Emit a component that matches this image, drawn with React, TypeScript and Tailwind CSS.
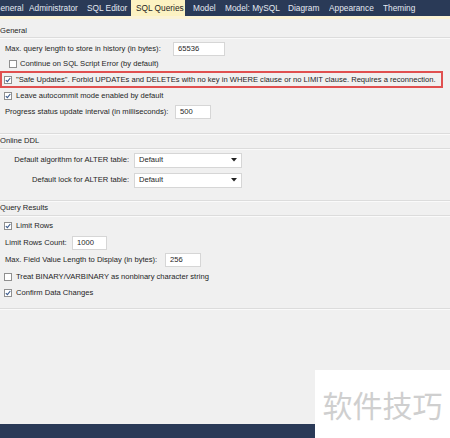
import React from 'react';

const tabs = [
  { label: 'General', w: 'w-[29px]', pad: '', cut: true },
  { label: 'Administrator', w: 'w-[58px]', pad: '' },
  { label: 'SQL Editor', w: 'w-[44px]', pad: '' },
  { label: 'SQL Queries', w: 'w-[54px]', pad: 'pl-[5px]', active: true },
  { label: 'Model', w: 'w-[40px]', pad: 'pl-[8px]' },
  { label: 'Model: MySQL', w: 'w-[63px]', pad: '' },
  { label: 'Diagram', w: 'w-[41px]', pad: '' },
  { label: 'Appearance', w: 'w-[54px]', pad: '' },
  { label: 'Theming', w: 'w-[60px]', pad: '' },
];

function Check({ checked }: { checked?: boolean }) {
  return (
    <span className="w-[8px] h-[8px] border border-[#8f8f8f] bg-white flex items-center justify-center shrink-0">
      {checked && (
        <svg width="6" height="6" viewBox="0 0 6 6">
          <path d="M0.8 3.1 L2.4 4.7 L5.3 1" stroke="#3a5a8c" strokeWidth="1.1" fill="none" />
        </svg>
      )}
    </span>
  );
}

function Field({ value, w }: { value: string; w: string }) {
  return (
    <span className={`${w} h-[14px] bg-white border border-[#d6d6d6] flex items-center pl-[4px] shrink-0`}>{value}</span>
  );
}

function Select({ value }: { value: string }) {
  return (
    <span className="w-[108px] h-[15px] bg-white border border-[#d6d6d6] flex items-center justify-between pl-[4px] pr-[4px]">
      <span>{value}</span>
      <svg width="6" height="4" viewBox="0 0 6 4">
        <path d="M0 0 H6 L3 3.5 Z" fill="#222" />
      </svg>
    </span>
  );
}

function SectionHead({ title, h }: { title: string; h: string }) {
  return (
    <div className={`${h} flex items-center border-b border-[#dcdcdc] shadow-[0_1px_0_#fafafa]`}>
      <span>{title}</span>
    </div>
  );
}

function Divider() {
  return <div className="border-t border-[#dcdcdc] shadow-[0_1px_0_#fafafa]" />;
}

export default function App() {
  return (
    <div
      className="w-[450px] h-[438px] bg-[#f0f0f0] text-[7.6px] text-[#1e1e1e] relative overflow-hidden"
      style={{ fontFamily: '"Liberation Sans", Arial, sans-serif' }}
    >
      {/* tab strip */}
      <div className="h-[16px] bg-[#2a3a57] flex items-stretch overflow-hidden text-[8.3px]">
        {tabs.map(t => (
          <div
            key={t.label}
            className={`${t.w} ${t.pad} shrink-0 flex items-center whitespace-nowrap overflow-hidden ${t.active ? 'bg-[#fcf2c2] text-[#1e1e1e]' : 'text-[#e4e9f2]'}`}
          >
            <span className={t.cut ? '-ml-[6px]' : ''}>{t.label}</span>
          </div>
        ))}
      </div>
      <div className="h-[3px] bg-[#fbf3d6]" />

      {/* General */}
      <div className="pt-[5px]">
        <SectionHead title="General" h="h-[14px]" />
        <div className="h-[18px] flex items-center pl-[5px] mt-[2px]">
          <span className="w-[168px]">Max. query length to store in history (in bytes):</span>
          <Field value="65536" w="w-[52px]" />
        </div>
        <div className="h-[12px] flex items-center pl-[9px] gap-[3px]">
          <Check />
          <span>Continue on SQL Script Error (by default)</span>
        </div>
        <div className="h-[17px] w-[443px] border-2 border-[#e05050] flex items-center pl-[2px] gap-[4px] mt-[1px]">
          <Check checked />
          <span>"Safe Updates". Forbid UPDATEs and DELETEs with no key in WHERE clause or no LIMIT clause. Requires a reconnection.</span>
        </div>
        <div className="h-[16px] flex items-center pl-[4px] gap-[4px]">
          <Check checked />
          <span>Leave autocommit mode enabled by default</span>
        </div>
        <div className="h-[16px] flex items-center pl-[5px]">
          <span className="w-[170px]">Progress status update interval (in milliseconds):</span>
          <Field value="500" w="w-[36px]" />
        </div>
        <div className="h-[13px]" />
        <Divider />
      </div>

      {/* Online DDL */}
      <div>
        <SectionHead title="Online DDL" h="h-[15px]" />
        <div className="h-[20px] flex items-center mt-[1px]">
          <span className="w-[134px] text-right pr-[5px]">Default algorithm for ALTER table:</span>
          <Select value="Default" />
        </div>
        <div className="h-[20px] flex items-center">
          <span className="w-[134px] text-right pr-[5px]">Default lock for ALTER table:</span>
          <Select value="Default" />
        </div>
        <div className="h-[10px]" />
        <Divider />
      </div>

      {/* Query Results */}
      <div>
        <SectionHead title="Query Results" h="h-[15px]" />
        <div className="h-[17px] flex items-center pl-[4px] gap-[4px] mt-[1px]">
          <Check checked />
          <span>Limit Rows</span>
        </div>
        <div className="h-[17px] flex items-center pl-[5px]">
          <span className="w-[67px]">Limit Rows Count:</span>
          <Field value="1000" w="w-[35px]" />
        </div>
        <div className="h-[17px] flex items-center pl-[5px]">
          <span className="w-[160px]">Max. Field Value Length to Display (in bytes):</span>
          <Field value="256" w="w-[36px]" />
        </div>
        <div className="h-[17px] flex items-center pl-[4px] gap-[4px]">
          <Check />
          <span>Treat BINARY/VARBINARY as nonbinary character string</span>
        </div>
        <div className="h-[15px] flex items-center pl-[4px] gap-[4px]">
          <Check checked />
          <span>Confirm Data Changes</span>
        </div>
        <div className="h-[8px]" />
        <Divider />
      </div>

      {/* bottom bar */}
      <div className="absolute left-0 bottom-0 w-[315px] h-[14px] bg-[#2a3a57]" />

      {/* watermark */}
      <div className="absolute right-0 bottom-0 w-[135px] h-[68px] bg-white flex items-center justify-center">
        <span
          className="text-[30px] text-[#cfcfcf]"
          style={{ fontFamily: '"Noto Sans CJK SC", sans-serif' }}
        >
          软件技巧
        </span>
      </div>
    </div>
  );
}
